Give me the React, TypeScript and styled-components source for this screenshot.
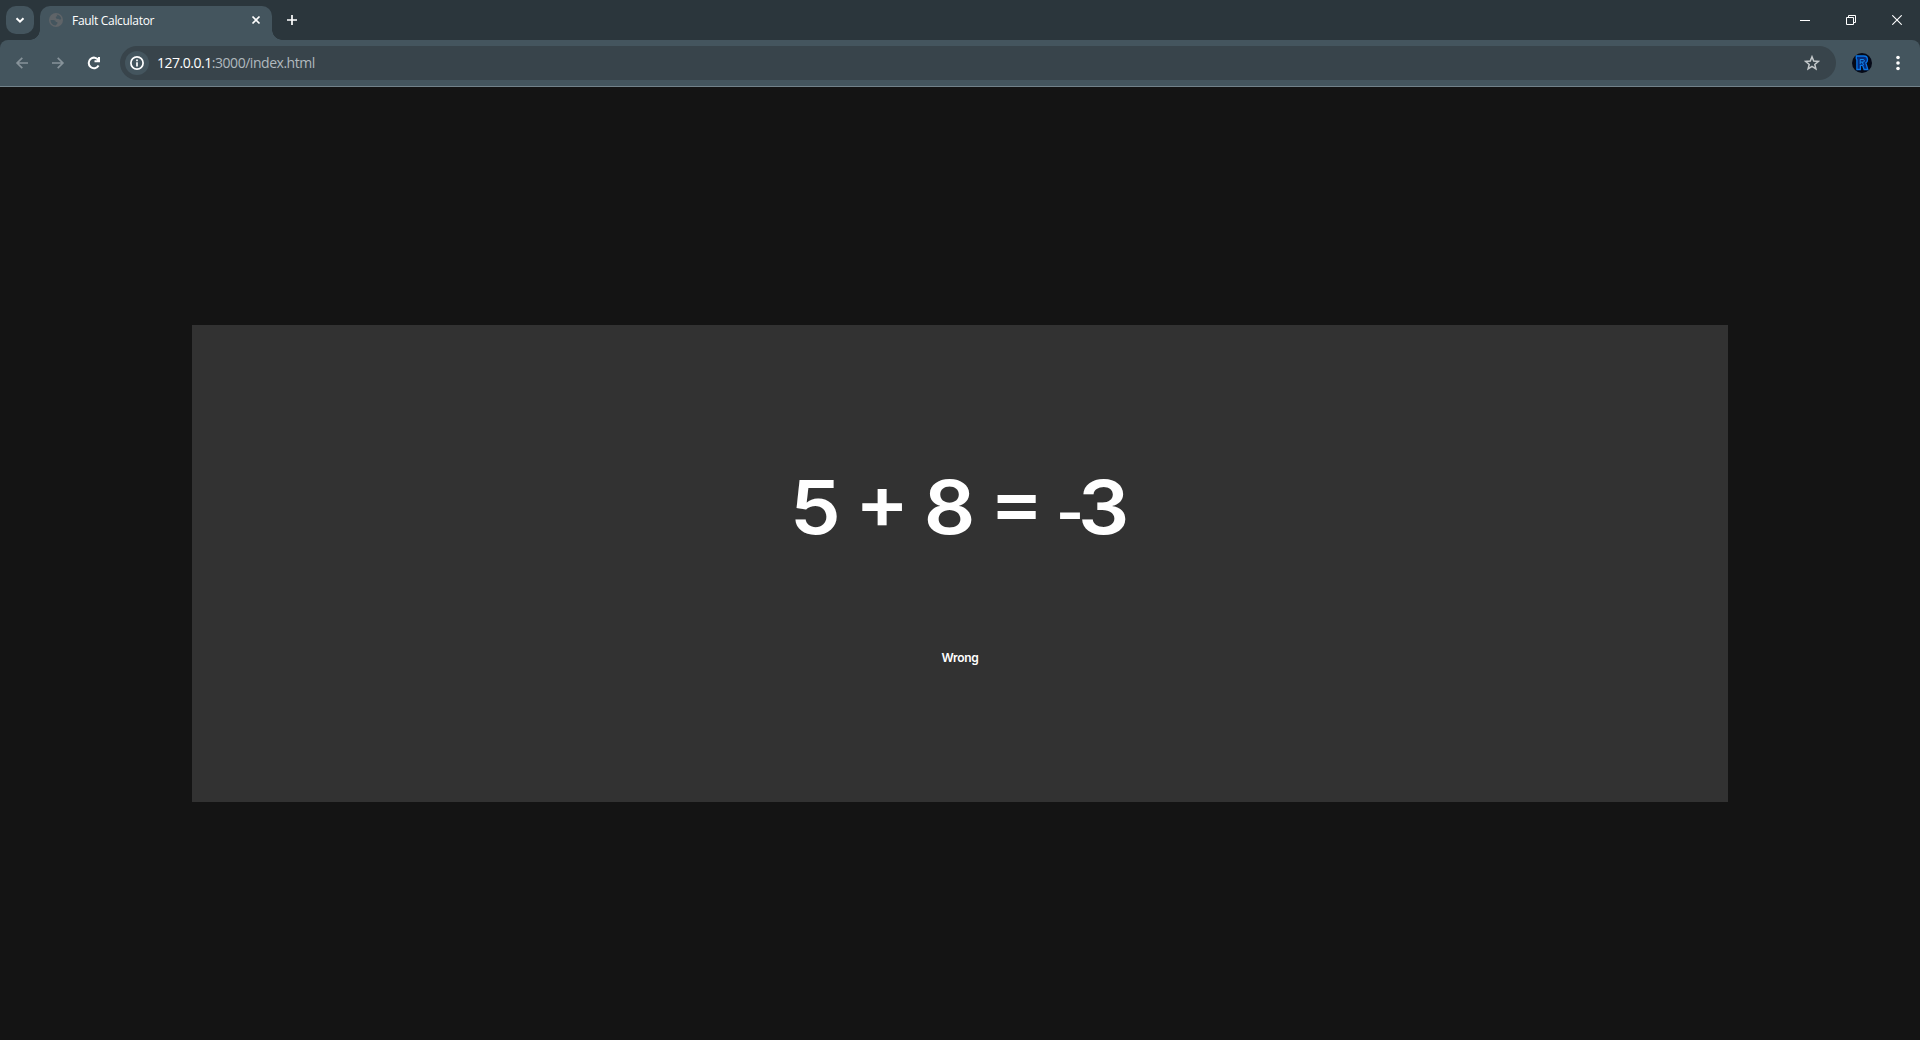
import React from "react";
import styled, { createGlobalStyle } from "styled-components";

const Global = createGlobalStyle`
  * { box-sizing: border-box; }
  body { margin: 0; background: #141414; overflow: hidden; }
`;
const Window = styled.div`
  display: flex;
  flex-direction: column;
  width: 100%;
  height: 100vh;
  font-family: "Open Sans", "Noto Sans", sans-serif;
  color: #fff;
  background: #2b363c;
`;
const TabStrip = styled.header`
  display: flex;
  height: 40px;
  padding: 6px 0 0 6px;
  background: #2b363c;
`;
const TabSearch = styled.button`
  display: grid;
  place-items: center;
  width: 28px;
  height: 28px;
  margin: 0 6px 0 0;
  padding: 0;
  border: 0;
  border-radius: 10px;
  background: #44555e;
`;
const Tab = styled.div`
  position: relative;
  display: flex;
  align-items: center;
  width: 232px;
  height: 34px;
  padding: 0 10px 6px 9px;
  border-radius: 10px 10px 0 0;
  background: #44555e;
  &::before, &::after {
    content: "";
    position: absolute;
    bottom: 0;
    width: 10px;
    height: 10px;
  }
  &::before { left: -10px; background: radial-gradient(circle at 0 0, transparent 9.5px, #44555e 10px); }
  &::after { right: -10px; background: radial-gradient(circle at 100% 0, transparent 9.5px, #44555e 10px); }
`;
const TabTitle = styled.span`
  flex: 1;
  margin-left: 9px;
  padding-top: 1px;
  font-size: 12px;
  line-height: 16px;
  letter-spacing: -0.31px;
  white-space: nowrap;
`;
const NewTab = styled.div`
  display: grid;
  place-items: center;
  width: 28px;
  height: 28px;
  margin-left: 6px;
`;
const WindowControls = styled.div`
  display: flex;
  height: 40px;
  margin: -6px 0 0 auto;
`;
const Control = styled.div`
  display: grid;
  place-items: center;
  width: 46px;
  height: 40px;
`;
const Toolbar = styled.nav`
  display: flex;
  align-items: center;
  height: 47px;
  padding: 0 14px;
  border-bottom: 1px solid #72828a;
  border-radius: 8px 8px 0 0;
  background: #44555e;
`;
const NavIcons = styled.div`
  display: flex;
  gap: 20px;
  margin-right: 18px;
`;
const AddressBar = styled.div`
  display: flex;
  flex: 1;
  align-items: center;
  height: 34px;
  padding: 0 16px 0 5px;
  border-radius: 17px;
  background: #38444b;
`;
const SiteInfo = styled.div`
  display: grid;
  place-items: center;
  width: 24px;
  height: 24px;
  border-radius: 50%;
  background: #44555e;
`;
const Url = styled.span`
  flex: 1;
  margin-left: 8px;
  font-size: 14px;
  line-height: 20px;
  letter-spacing: -0.47px;
  color: #b0b9be;
`;
const Host = styled.span`
  color: #fff;
`;
const Actions = styled.div`
  display: flex;
  align-items: center;
  gap: 18px;
  margin-left: 16px;
`;
const Page = styled.main`
  display: flex;
  flex: 1;
  align-items: center;
  justify-content: center;
  background: #141414;
`;
const Card = styled.section`
  display: flex;
  flex-direction: column;
  align-items: center;
  width: 80%;
  height: 50%;
  padding-top: 132px;
  background: #323232;
  font-family: Inter, "Liberation Sans", sans-serif;
`;
const Equation = styled.h1`
  margin: 0;
  font-size: 74px;
  font-weight: 600;
  line-height: 100px;
  word-spacing: -5.5px;
  white-space: nowrap;
  transform: scaleX(1.09);
`;
const Minus = styled.span`
  margin-left: -2px;
  font-size: 55px;
  font-weight: 700;
  line-height: 1;
  letter-spacing: -5.5px;
  vertical-align: 2px;
`;
const Verdict = styled.p`
  margin: 92px 0 0;
  font-size: 12px;
  font-weight: 600;
  line-height: 18px;
  letter-spacing: -0.3px;
`;

type GlyphProps = { size?: number; color?: string; weight?: number; children: React.ReactNode };
const Glyph = ({ size = 16, color = "#fff", weight = 2, children }: GlyphProps) => (
  <svg width={size} height={size} viewBox={`0 0 ${size} ${size}`} fill="none" stroke={color} strokeWidth={weight}>
    {children}
  </svg>
);

export default function App() {
  return (
    <Window>
      <Global />
      <TabStrip>
        <TabSearch aria-label="Search tabs"><Glyph><path d="M4.5 6.3 8 9.7l3.5-3.4" /></Glyph></TabSearch>
        <Tab>
          <Glyph size={14} color="none">
            <circle cx="7" cy="7" r="7" fill="#5f6468" />
            <path d="M7.6 1.5a5.5 5.5 0 0 1 4.7 4.2c-1 1.2-2.1 1.2-3 .1-1.2.3-2.4 0-2.5-1.2 0-1 .7-1.1 1.7-1.3zM1.5 7h2.8c1.5 0 2.4.7 2.5 1.9h1.5v1.8l-1.8 1.7A5.5 5.5 0 0 1 1.5 7z" fill="#44555e" />
          </Glyph>
          <TabTitle>Fault Calculator</TabTitle>
          <Glyph size={12} weight={1.7}><path d="m2.5 2.5 7 7m0-7-7 7" /></Glyph>
        </Tab>
        <NewTab><Glyph size={12} weight={1.7}><path d="M6 1v10M1 6h10" /></Glyph></NewTab>
        <WindowControls>
          <Control><Glyph size={10} weight={1}><path d="M0 5.5h10" /></Glyph></Control>
          <Control><Glyph size={10} weight={1}><path d="M.5 2.5h7v7h-7zM2.5 2.5v-2h7v7h-2" /></Glyph></Control>
          <Control><Glyph size={10} weight={1.1}><path d="m.3.3 9.4 9.4m0-9.4L.3 9.7" /></Glyph></Control>
        </WindowControls>
      </TabStrip>
      <Toolbar>
        <NavIcons>
          <Glyph color="#87939a" weight={1.7}><path d="M14 8H3.5M8.3 2.8 3.1 8l5.2 5.2" /></Glyph>
          <Glyph color="#87939a" weight={1.7}><path d="M2 8h10.5M7.7 2.8 12.9 8l-5.2 5.2" /></Glyph>
          <Glyph><path d="M12.6 10.6a5.3 5.3 0 1 1-.1-5.5M13 2v4.3H8.5" /></Glyph>
        </NavIcons>
        <AddressBar>
          <SiteInfo>
            <Glyph size={14} weight={1.7}>
              <circle cx="7" cy="7" r="6.1" />
              <path d="M7 6.2v4.2M7 3.6v1.6" />
            </Glyph>
          </SiteInfo>
          <Url><Host>127.0.0.1</Host>:3000/index.html</Url>
          <Glyph color="#c4c9cb" weight={1.5}>
            <path d="m8 1.8 1.7 4.3 4.6.3-3.5 3 1.1 4.5L8 11.4l-3.9 2.5 1.1-4.5-3.5-3 4.6-.3z" />
          </Glyph>
        </AddressBar>
        <Actions>
          <Glyph size={20}>
            <circle cx="10" cy="10" r="10" fill="#050917" stroke="none" />
            <path d="M4.3 3h7.4c2.4 0 3.8 1.4 3.8 3.7 0 1.5-.6 2.6-1.7 3.2l2 6.6h-3.7l-1.5-4.2H8.4v4.2H4.9V6.6l-.6-.8z" fill="#062a78" stroke="#0875e5" strokeWidth="1.3" />
            <path d="M8.2 11V6.5h2.9c1.7 0 1.7 2.6 0 2.6H8.4M10.2 9.3l1.4 2.6" stroke="#1593f4" strokeWidth=".9" />
          </Glyph>
          <Glyph color="none">
            <circle cx="8" cy="2.5" r="1.8" fill="#fff" />
            <circle cx="8" cy="8" r="1.8" fill="#fff" />
            <circle cx="8" cy="13.5" r="1.8" fill="#fff" />
          </Glyph>
        </Actions>
      </Toolbar>
      <Page>
        <Card>
          <Equation>5 + 8 = <Minus>-</Minus>3</Equation>
          <Verdict>Wrong</Verdict>
        </Card>
      </Page>
    </Window>
  );
}
